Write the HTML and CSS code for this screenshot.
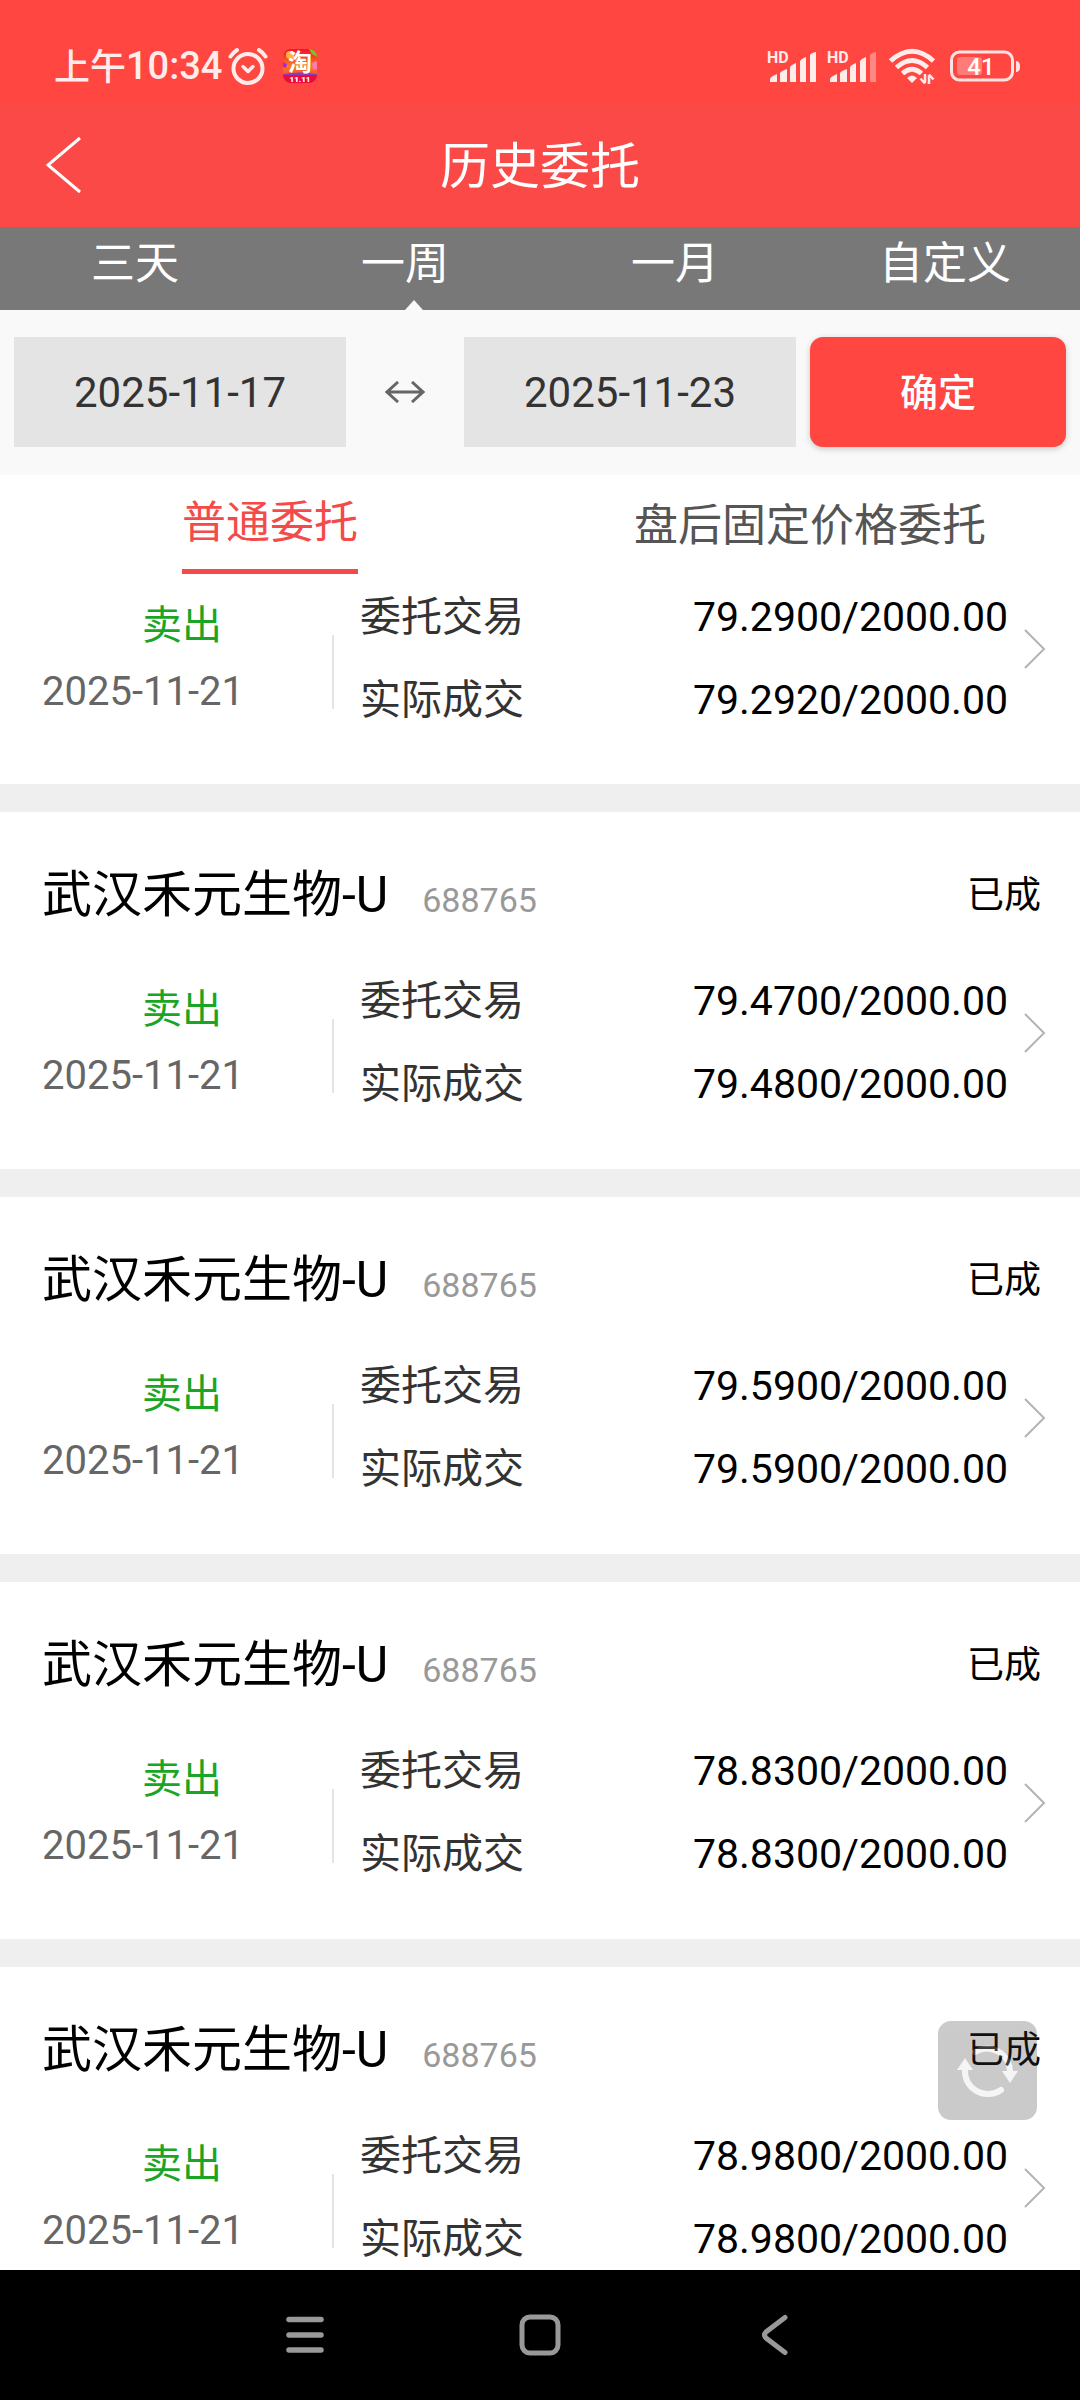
FILE: index.html
```html
<!DOCTYPE html>
<html lang="zh-CN">
<head>
<meta charset="utf-8">
<meta name="viewport" content="width=device-width, initial-scale=1">
<title>历史委托</title>
<link rel="stylesheet" href="styles.css">
</head>
<body>
<div class="app">
  <div class="status">
    <div class="status-left">
      <span class="status-period">上午</span><span class="status-time">10:34</span>
      <svg class="alarm" width="40" height="40" viewBox="0 0 40 40" fill="none" stroke="#ffeceb" stroke-linecap="round" stroke-linejoin="round">
        <circle cx="20" cy="22.500" r="14.500" stroke-width="4"/>
        <path d="M15 20.500l5 5 5-5" stroke-width="3.500"/>
        <path d="M2.500 10.500Q5 6.500 9 4M37.500 10.500Q35 6.500 31 4" stroke-width="4"/>
      </svg>
      <svg class="shop" width="34" height="34" viewBox="0 0 34 34">
        <defs>
          <clipPath id="shop-clip"><rect width="34" height="34" rx="8"/></clipPath>
          <linearGradient id="shop-bg" x1="0" y1="0" x2="0" y2="1"><stop offset="0" stop-color="#f5102e"/><stop offset=".5" stop-color="#fb7a1c"/><stop offset=".8" stop-color="#f0503a"/></linearGradient>
        </defs>
        <g clip-path="url(#shop-clip)">
          <rect width="34" height="34" fill="url(#shop-bg)"/>
          <circle cx="7" cy="6" r="4" fill="#ffb53a"/>
          <path d="M26 0h8v8l-5-3z" fill="#7cc427"/>
          <path d="M0 13l4 2-1 4-3-1z" fill="#a32be0"/>
          <path d="M29 14l5-2v8l-4 1z" fill="#ff7ab0"/>
          <path d="M0 25q17-3 34 0v1H0z" fill="#8a3bc4"/>
          <rect y="26" width="34" height="8" fill="#ee0a3c"/>
          <text class="shop-name" x="17" y="22" text-anchor="middle">淘</text>
          <text class="shop-date" x="17" y="33" text-anchor="middle">11.11</text>
        </g>
      </svg>
    </div>
    <div class="status-right">
      <svg width="52" height="34" viewBox="0 0 52 34" fill="#ffeceb">
        <text class="hd" x="1" y="14">HD</text>
        <path d="M4 33v-3q0-2 7-5v8zM14 33v-9q1-2 7-4v13zM24 33V18q1-2 6-4v19zM34 33V12q1-2 6-4v25zM44 33V6q1-2 6-3v30z"/>
      </svg>
      <svg width="52" height="34" viewBox="0 0 52 34" fill="#ffeceb">
        <text class="hd" x="1" y="14">HD</text>
        <path d="M4 33v-3q0-2 7-5v8zM14 33v-9q1-2 7-4v13zM24 33V18q1-2 6-4v19zM34 33V12q1-2 6-4v25z"/>
        <path d="M44 33V6q1-2 6-3v30z" opacity=".4"/>
      </svg>
      <svg class="wifi" width="48" height="38" viewBox="0 0 48 38">
        <g fill="none" stroke="#ffeceb" stroke-width="5">
          <path d="M2.500 14Q24-5.500 45.500 14"/>
          <path d="M8.500 20.500Q24 6.500 39.500 20.500"/>
          <path d="M14.500 26.500Q24 18 33.500 26.500"/>
        </g>
        <path d="M19 31q5-5 10 0l-5 5z" fill="#ffeceb"/>
        <path d="M37 27v9M32.500 31.500l4.500 5M41 37v-9M45.500 32.500l-4.500-5" fill="none" stroke="#ffeceb" stroke-width="2.500"/>
      </svg>
      <svg width="70" height="32" viewBox="0 0 70 32">
        <rect x="1.500" y="2" width="61" height="28" rx="8" fill="none" stroke="#ffe3e2" stroke-width="3"/>
        <rect x="7" y="7" width="25" height="18" rx="3" fill="#ff7b77"/>
        <path d="M66 11h1q3 1 3 5.500t-3 5.500h-1z" fill="#ffe3e2"/>
        <text class="battery-level" x="31" y="25" text-anchor="middle">41</text>
      </svg>
    </div>
  </div>

  <header class="header">
    <button class="back" type="button" aria-label="返回">
      <svg width="36" height="58" viewBox="0 0 36 58" fill="none" stroke="#fff" stroke-width="3"><path d="M34 2L2 29l32 27"/></svg>
    </button>
    <h1 class="title">历史委托</h1>
  </header>

  <nav class="ranges">
    <button class="range" type="button">三天</button>
    <button class="range range-active" type="button">一周</button>
    <button class="range" type="button">一月</button>
    <button class="range" type="button">自定义</button>
  </nav>

  <form class="filter">
    <input class="date" type="text" value="2025-11-17" aria-label="开始日期" readonly>
    <svg class="between" width="40" height="22" viewBox="0 0 40 22" fill="none" stroke="#666" stroke-width="3"><path d="M2 11h36M13 1L2 11l11 10M27 1l11 10-11 10"/></svg>
    <input class="date" type="text" value="2025-11-23" aria-label="结束日期" readonly>
    <button class="confirm" type="button">确定</button>
  </form>

  <div class="kinds">
    <button class="kind kind-active" type="button"><span class="kind-label">普通委托</span></button>
    <button class="kind" type="button"><span class="kind-label">盘后固定价格委托</span></button>
  </div>

  <main class="list">
    <article class="order order-scrolled">
      <div class="order-body">
        <div class="deal"><span class="side">卖出</span><time class="day">2025-11-21</time></div>
        <dl class="figures">
          <div class="figure"><dt>委托交易</dt><dd>79.2900/2000.00</dd></div>
          <div class="figure"><dt>实际成交</dt><dd>79.2920/2000.00</dd></div>
        </dl>
        <svg class="more" width="22" height="40" viewBox="0 0 22 40"><path d="M1 1l19 19L1 39"/></svg>
      </div>
    </article>

    <article class="order">
      <div class="order-head"><h2 class="name">武汉禾元生物-U</h2><span class="code">688765</span><span class="state">已成</span></div>
      <div class="order-body">
        <div class="deal"><span class="side">卖出</span><time class="day">2025-11-21</time></div>
        <dl class="figures">
          <div class="figure"><dt>委托交易</dt><dd>79.4700/2000.00</dd></div>
          <div class="figure"><dt>实际成交</dt><dd>79.4800/2000.00</dd></div>
        </dl>
        <svg class="more" width="22" height="40" viewBox="0 0 22 40"><path d="M1 1l19 19L1 39"/></svg>
      </div>
    </article>

    <article class="order">
      <div class="order-head"><h2 class="name">武汉禾元生物-U</h2><span class="code">688765</span><span class="state">已成</span></div>
      <div class="order-body">
        <div class="deal"><span class="side">卖出</span><time class="day">2025-11-21</time></div>
        <dl class="figures">
          <div class="figure"><dt>委托交易</dt><dd>79.5900/2000.00</dd></div>
          <div class="figure"><dt>实际成交</dt><dd>79.5900/2000.00</dd></div>
        </dl>
        <svg class="more" width="22" height="40" viewBox="0 0 22 40"><path d="M1 1l19 19L1 39"/></svg>
      </div>
    </article>

    <article class="order">
      <div class="order-head"><h2 class="name">武汉禾元生物-U</h2><span class="code">688765</span><span class="state">已成</span></div>
      <div class="order-body">
        <div class="deal"><span class="side">卖出</span><time class="day">2025-11-21</time></div>
        <dl class="figures">
          <div class="figure"><dt>委托交易</dt><dd>78.8300/2000.00</dd></div>
          <div class="figure"><dt>实际成交</dt><dd>78.8300/2000.00</dd></div>
        </dl>
        <svg class="more" width="22" height="40" viewBox="0 0 22 40"><path d="M1 1l19 19L1 39"/></svg>
      </div>
    </article>

    <article class="order">
      <div class="order-head"><h2 class="name">武汉禾元生物-U</h2><span class="code">688765</span><span class="state">已成</span></div>
      <div class="order-body">
        <div class="deal"><span class="side">卖出</span><time class="day">2025-11-21</time></div>
        <dl class="figures">
          <div class="figure"><dt>委托交易</dt><dd>78.9800/2000.00</dd></div>
          <div class="figure"><dt>实际成交</dt><dd>78.9800/2000.00</dd></div>
        </dl>
        <svg class="more" width="22" height="40" viewBox="0 0 22 40"><path d="M1 1l19 19L1 39"/></svg>
      </div>
    </article>

    <button class="refresh" type="button" aria-label="刷新">
      <svg width="99" height="99" viewBox="0 0 99 99">
        <g fill="none" stroke="#dcdcdc" stroke-width="6" stroke-linecap="round"><path d="M27 48A23 23 0 0 0 63 69"/><path d="M37 31A23 23 0 0 1 72 50"/></g>
        <path d="M27 37l8 12H19zM72 62l-8-12h16z" fill="#dcdcdc"/>
      </svg>
    </button>
  </main>

  <nav class="system">
    <button class="key" type="button" aria-label="菜单">
      <svg width="40" height="40" viewBox="0 0 40 40" fill="none" stroke="#999" stroke-width="5.500" stroke-linecap="round"><path d="M4 4.500h32M4 20h32M4 35h32"/></svg>
    </button>
    <button class="key" type="button" aria-label="主页">
      <svg width="42" height="42" viewBox="0 0 42 42" fill="none" stroke="#999" stroke-width="5"><rect x="3" y="3" width="36" height="36" rx="8"/></svg>
    </button>
    <button class="key" type="button" aria-label="后退">
      <svg width="28" height="42" viewBox="0 0 28 42" fill="none" stroke="#999" stroke-width="5" stroke-linecap="round"><path d="M24 3.500L5 18q-3 3 0 6l19 14.500"/></svg>
    </button>
  </nav>
</div>
</body>
</html>
```

FILE: styles.css
```css
* {
  box-sizing: border-box;
}

body {
  margin: 0;
  background: #fff;
  color: #000;
  font-family: Roboto, "Noto Sans CJK SC", sans-serif;
}

button,
input {
  margin: 0;
  padding: 0;
  border: 0;
  border-radius: 0;
  background: none;
  color: inherit;
  font: inherit;
}

svg {
  display: block;
  flex: none;
}

.app {
  display: flex;
  flex-direction: column;
  height: 100vh;
}

/* Phone status bar */
.status {
  display: flex;
  flex: none;
  justify-content: space-between;
  height: 103px;
  padding: 29px 60px 0 54px;
  background: #ff4640;
  color: #ffeceb;
}

.status-left,
.status-right {
  display: flex;
  align-items: center;
}

.status-right {
  gap: 8px;
}

.wifi {
  margin: 0 6px 0 2px;
}

.status-period {
  padding-bottom: 4px;
  font-size: 36px;
  font-weight: 500;
}

.status-time {
  font-size: 38px;
  font-weight: 500;
}

.alarm {
  margin-left: 6px;
}

.shop {
  margin-left: 15px;
}

.shop-name {
  fill: #fff;
  font-size: 24px;
  font-weight: 700;
}

.shop-date {
  fill: #fff;
  font-size: 8px;
  font-weight: 900;
}

.hd {
  font-size: 16px;
  font-weight: 700;
}

.battery-level {
  fill: #fff;
  font-size: 24px;
  font-weight: 500;
}

/* Page header */
.header {
  display: grid;
  flex: none;
  grid-template-columns: 128px 1fr 128px;
  align-items: center;
  height: 124px;
  background: #fb4948;
  color: #fff;
}

.back {
  display: flex;
  justify-content: center;
}

.title {
  margin: 0;
  padding-bottom: 6px;
  font-size: 50px;
  font-weight: 400;
  text-align: center;
}

.ranges {
  display: grid;
  flex: none;
  grid-template-columns: repeat(4, 1fr);
  height: 83px;
  background: #787878;
  color: #fff;
}

.range {
  position: relative;
  padding-bottom: 9px;
  font-size: 44px;
  line-height: 74px;
}

.range-active::after {
  content: "";
  position: absolute;
  bottom: 0;
  left: 50%;
  border: 9px solid transparent;
  border-top: 0;
  border-bottom: 10px solid #f9f9f9;
}

/* Date filter */
.filter {
  display: flex;
  flex: none;
  align-items: center;
  padding: 27px 14px 28px;
  background: #f9f9f9;
}

.date {
  flex: 332 1 0;
  min-width: 0;
  height: 110px;
  background: #e4e4e4;
  color: #333;
  font-size: 42px;
  text-align: center;
}

.between {
  margin: 0 39px;
}

.confirm {
  flex: 256 1 0;
  height: 110px;
  margin-left: 14px;
  padding-bottom: 6px;
  border-radius: 13px;
  background: #ff4640;
  box-shadow: 0 2px 6px rgba(0, 0, 0, 0.2);
  color: #fff;
  font-size: 38px;
  font-weight: 500;
}

.kinds {
  display: grid;
  flex: none;
  grid-template-columns: 1fr 1fr;
  height: 99px;
  color: #555;
  font-size: 44px;
}

.kind {
  display: flex;
  justify-content: center;
}

.kind-label {
  height: 99px;
  line-height: 102px;
}

.kind-active .kind-label {
  border-bottom: 5px solid #f54a4a;
  color: #f54a4a;
  line-height: 96px;
}

/* Orders */
.list {
  position: relative;
  flex: 1;
  min-height: 0;
  overflow: hidden;
}

.order {
  padding: 18px 34px 45px 42px;
}

.order-scrolled {
  padding-top: 0;
  padding-bottom: 44px;
}

.order + .order {
  border-top: 28px solid #efefef;
}

.order-head {
  display: flex;
  align-items: baseline;
  height: 128px;
  line-height: 130px;
}

.name {
  margin: 0;
  font-size: 50px;
  font-weight: 400;
}

.code {
  margin-left: 34px;
  color: #999;
  font-size: 34px;
}

.state {
  align-self: flex-start;
  margin: 0 5px 0 auto;
  font-size: 37px;
  line-height: 132px;
}

.order-body {
  display: flex;
  height: 166px;
}

.deal {
  display: flex;
  flex-direction: column;
  width: 280px;
  padding-top: 19px;
  font-size: 40px;
  line-height: 66px;
}

.side {
  color: #1aa527;
  text-align: center;
}

.day {
  color: #666;
}

.figures {
  flex: 1;
  margin: 0 0 0 10px;
  padding: 2px 16px 0 28px;
  background: linear-gradient(#e4e4e4, #e4e4e4) 0 61px / 2px 74px no-repeat;
}

.figure {
  display: flex;
  justify-content: space-between;
  font-size: 41px;
  line-height: 83px;
}

.figure dt {
  color: #333;
}

.figure dd {
  margin: 0;
}

.more {
  margin-top: 55px;
  fill: none;
  stroke: #b3b3b3;
  stroke-width: 2px;
}

.refresh {
  position: absolute;
  right: 43px;
  bottom: 150px;
  border-radius: 13px;
  background: #404040;
  opacity: 0.27;
}

/* Phone navigation keys */
.system {
  display: flex;
  flex: none;
  justify-content: center;
  height: 130px;
  background: #000;
}

.key {
  display: flex;
  align-items: center;
  justify-content: center;
  width: 235px;
}
```
